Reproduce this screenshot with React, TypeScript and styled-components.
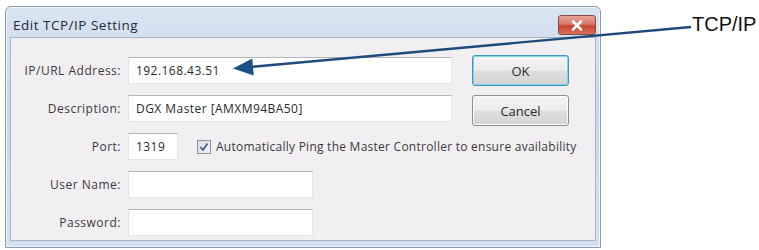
import React from "react";
import styled, { createGlobalStyle } from "styled-components";

const Global = createGlobalStyle`
  html, body { margin: 0; padding: 0; background: #ffffff; }
  body { font-family: "Open Sans", "Noto Sans", sans-serif; }
`;

const Page = styled.div`
  position: relative;
  width: 759px;
  height: 250px;
  background: #ffffff;
  padding: 6px 0 0 5px;
  box-sizing: border-box;
  overflow: hidden;
`;

const Window = styled.div`
  width: 596px;
  height: 242px;
  box-sizing: border-box;
  border: 1px solid #8d9aab;
  border-radius: 6px 6px 0 0;
  background: linear-gradient(180deg, #d9e4f2 0%, #c9d8eb 40%, #d3e0ef 100%);
  display: flex;
  flex-direction: column;
  padding: 0 4px 6px 4px;
  box-shadow: inset 0 0 0 1px #eef4fb;
`;

const TitleBar = styled.div`
  height: 30px;
  display: flex;
  align-items: center;
  justify-content: space-between;
  padding: 0 0 0 3px;
`;

const Title = styled.span`
  font-size: 13.5px;
  color: #1f2a36;
  letter-spacing: 0.5px;
  margin-top: 5px;
`;

const CloseButton = styled.div`
  width: 38px;
  height: 20px;
  margin-top: 6px;
  box-sizing: border-box;
  border: 1px solid #8a4b44;
  border-radius: 3px;
  background: linear-gradient(180deg, #e8a696 0%, #d9786a 45%, #c8422f 55%, #d9705c 100%);
  display: flex;
  align-items: center;
  justify-content: center;
`;

const Client = styled.div`
  flex: 1;
  background: #f2eff3;
  border: 1px solid #a9b6c5;
  display: flex;
  align-items: flex-start;
  padding: 17px 0 0 0;
`;

const Form = styled.div`
  display: grid;
  grid-template-columns: 110px 324px;
  grid-auto-rows: 27px;
  column-gap: 7px;
  row-gap: 11px;
  align-items: center;
  margin-top: 2px;
`;

const Label = styled.label`
  font-size: 12px;
  color: #3a3a3a;
  text-align: right;
  letter-spacing: 0.5px;
  white-space: nowrap;
`;

const Field = styled.div<{ $w: number }>`
  width: ${(p) => p.$w}px;
  height: 27px;
  flex-shrink: 0;
  box-sizing: border-box;
  background: #ffffff;
  border: 1px solid #e2e6ea;
  border-top-color: #b3b6bb;
  display: flex;
  align-items: center;
  padding: 0 0 0 7px;
  font-size: 12px;
  color: #2a2a2a;
  letter-spacing: 0.45px;
  white-space: nowrap;
`;

const PortRow = styled.div`
  display: flex;
  align-items: center;
  width: 324px;
  overflow: visible;
`;

const Check = styled.div`
  width: 14px;
  height: 14px;
  flex-shrink: 0;
  box-sizing: border-box;
  margin-left: 19px;
  margin-right: 5px;
  border: 1px solid #8f8f9a;
  background: linear-gradient(135deg, #dcdce8, #f4f4f8);
  display: flex;
  align-items: center;
  justify-content: center;
`;

const CheckText = styled.span`
  font-size: 12px;
  color: #3a3a3a;
  letter-spacing: 0.25px;
  white-space: nowrap;
`;

const Buttons = styled.div`
  display: flex;
  flex-direction: column;
  gap: 9px;
  margin-left: 20px;
`;

const Button = styled.div<{ $default?: boolean }>`
  width: 97px;
  height: 31px;
  box-sizing: border-box;
  border-radius: 3px;
  border: 1px solid ${(p) => (p.$default ? "#3c98b8" : "#8e8e8e")};
  box-shadow: ${(p) => (p.$default ? "inset 0 0 0 1px #7fd4ea" : "inset 0 0 0 1px #fbfbfb")};
  background: linear-gradient(180deg, #f4f4f4 0%, #ececec 48%, #dedede 52%, #d4d4d4 100%);
  display: flex;
  align-items: center;
  justify-content: center;
  font-size: 13px;
  color: #2a2a2a;
`;

const Overlay = styled.svg`
  position: absolute;
  left: 0;
  top: 0;
  pointer-events: none;
`;

const Callout = styled.span`
  position: absolute;
  left: 692px;
  top: 13px;
  font-family: "Liberation Sans", Arial, sans-serif;
  font-size: 20px;
  color: #111111;
`;

export default function App() {
  return (
    <>
      <Global />
      <Page>
        <Window>
          <TitleBar>
            <Title>Edit TCP/IP Setting</Title>
            <CloseButton>
              <svg width="12" height="11" viewBox="0 0 12 11">
                <path d="M2 1.5 L10 9.5 M10 1.5 L2 9.5" stroke="#ffffff" strokeWidth="2.6" strokeLinecap="round" />
              </svg>
            </CloseButton>
          </TitleBar>
          <Client>
            <Form>
              <Label>IP/URL Address:</Label>
              <Field $w={324}>192.168.43.51</Field>
              <Label>Description:</Label>
              <Field $w={324}>DGX Master [AMXM94BA50]</Field>
              <Label>Port:</Label>
              <PortRow>
                <Field $w={50}>1319</Field>
                <Check>
                  <svg width="10" height="10" viewBox="0 0 10 10">
                    <path d="M1.5 5 L4 8 L8.5 1.5" stroke="#3a4a8a" strokeWidth="1.6" fill="none" />
                  </svg>
                </Check>
                <CheckText>Automatically Ping the Master Controller to ensure availability</CheckText>
              </PortRow>
              <Label>User Name:</Label>
              <Field $w={185} />
              <Label>Password:</Label>
              <Field $w={185} />
            </Form>
            <Buttons>
              <Button $default>OK</Button>
              <Button>Cancel</Button>
            </Buttons>
          </Client>
        </Window>
        <Overlay width="759" height="250" viewBox="0 0 759 250">
          <line x1="250" y1="67" x2="691" y2="27" stroke="#1d4c7c" strokeWidth="2.4" />
          <polygon points="233,68.5 252.3,58.5 253.7,75.5" fill="#1c4f86" />
        </Overlay>
        <Callout>TCP/IP</Callout>
      </Page>
    </>
  );
}
